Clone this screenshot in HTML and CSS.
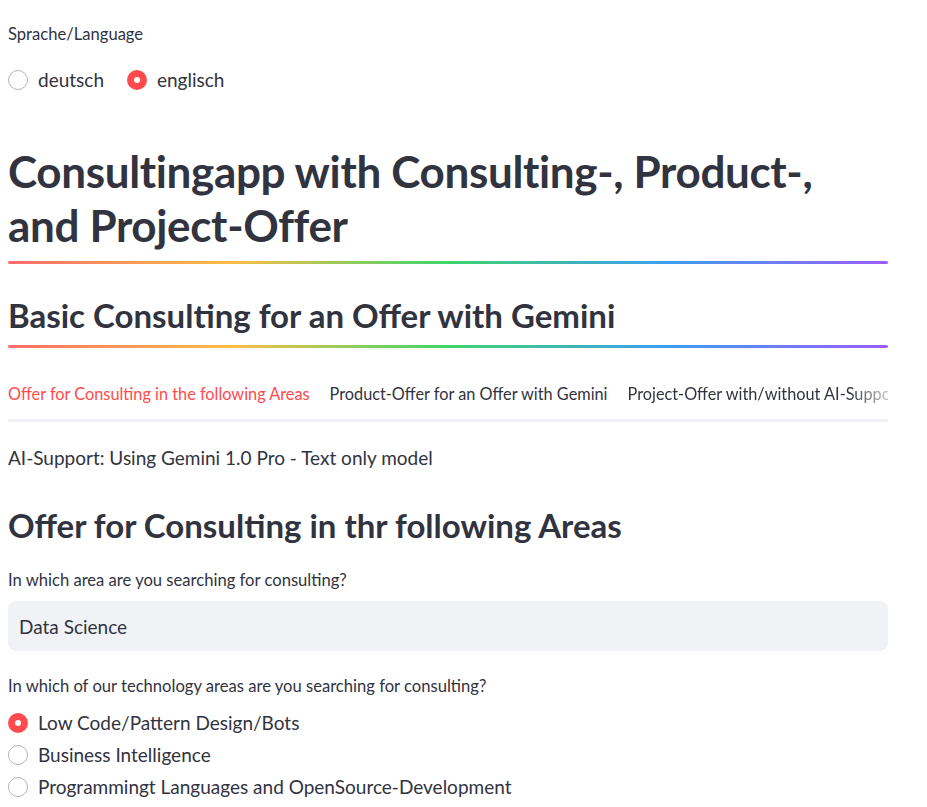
FILE: index.html
```html
<!DOCTYPE html>
<html lang="en">
<head>
<meta charset="utf-8">
<title>Consultingapp</title>
<link rel="stylesheet" href="styles.css">
</head>
<body>
<main class="main">
  <div class="label lang-label">Sprache/Language</div>
  <div class="radio-row">
    <label class="radio"><span class="dot"></span><span>deutsch</span></label>
    <label class="radio"><span class="dot on"></span><span>englisch</span></label>
  </div>

  <h1 class="h1">Consultingapp with Consulting-, Product-, and Project-Offer</h1>
  <div class="rainbow r1"></div>

  <h2 class="h2">Basic Consulting for an Offer with Gemini</h2>
  <div class="rainbow r2"></div>

  <div class="tabs">
    <div class="tab active">Offer for Consulting in the following Areas</div>
    <div class="tab">Product-Offer for an Offer with Gemini</div>
    <div class="tab fade">Project-Offer with/without AI-Support</div>
  </div>

  <p class="text">AI-Support: Using Gemini 1.0 Pro - Text only model</p>

  <h3 class="h3">Offer for Consulting in thr following Areas</h3>

  <div class="label area-label">In which area are you searching for consulting?</div>
  <div class="input">Data Science</div>

  <div class="label tech-label">In which of our technology areas are you searching for consulting?</div>
  <div class="radio-col">
    <label class="radio"><span class="dot on"></span><span>Low Code/Pattern Design/Bots</span></label>
    <label class="radio"><span class="dot"></span><span>Business Intelligence</span></label>
    <label class="radio"><span class="dot"></span><span>Programmingt Languages and OpenSource-Development</span></label>
  </div>
</main>
</body>
</html>
```
FILE: styles.css
```css
html, body {
  margin: 0;
  padding: 0;
  background: #ffffff;
}
body {
  font-family: "Source Sans Pro", Lato, "Liberation Sans", sans-serif;
  color: #31333f;
}
.main {
  width: 880px;
  margin-left: 8px;
  padding-top: 24px;
}
.label {
  font-size: 16.6px;
  line-height: 20px;
  height: 20px;
  white-space: nowrap;
}
.radio-row {
  display: flex;
  gap: 23px;
  margin-top: 26px;
  height: 20px;
}
.radio {
  display: flex;
  align-items: center;
  gap: 10px;
  font-size: 19px;
  line-height: 20px;
  white-space: nowrap;
}
.dot {
  box-sizing: border-box;
  width: 20px;
  height: 20px;
  border-radius: 50%;
  border: 1px solid #b4b4b8;
  background: #fff;
  display: inline-block;
  flex: none;
}
.dot.on {
  border: 7px solid #ff4b4b;
  background: #fff;
}
.h1 {
  font-size: 44px;
  font-weight: 700;
  line-height: 54px;
  margin: 54px 0 0;
  letter-spacing: -0.35px;
}
.rainbow {
  height: 3px;
  border-radius: 2px;
  background: linear-gradient(90deg, #ff6c6c, #ffbd45, #3dd56d, #3d9df3, #9a5dff);
}
.r1 { margin-top: 9px; }
.h2 {
  font-size: 33px;
  font-weight: 700;
  line-height: 40px;
  margin: 31px 0 0;
}
.r2 { margin-top: 10px; }
.tabs {
  display: flex;
  gap: 20px;
  margin-top: 34px;
  border-bottom: 3px solid #f0f2f6;
  white-space: nowrap;
  overflow: hidden;
}
.tab {
  font-size: 16.3px;
  line-height: 24px;
  padding-bottom: 13px;
  margin-bottom: -3px;
  border-bottom: 3px solid transparent;
}
.tab.active {
  color: #ff4b4b;
  border-bottom-color: #ff4b4b;
}
.tab.fade {
  -webkit-mask-image: linear-gradient(90deg, #000 80%, transparent);
  mask-image: linear-gradient(90deg, #000 80%, transparent);
}
.text {
  font-size: 19px;
  line-height: 24px;
  margin: 24px 0 0;
}
.h3 {
  font-size: 33px;
  font-weight: 700;
  line-height: 36px;
  margin: 37px 0 0;
}
.area-label { margin-top: 27px; }
.input {
  margin-top: 11px;
  height: 50px;
  border-radius: 8px;
  background: #f0f2f6;
  box-sizing: border-box;
  padding: 0 11px;
  display: flex;
  align-items: center;
  font-size: 19px;
}
.tech-label { margin-top: 25px; }
.radio-col {
  display: flex;
  flex-direction: column;
  gap: 12px;
  margin-top: 17px;
}
```
